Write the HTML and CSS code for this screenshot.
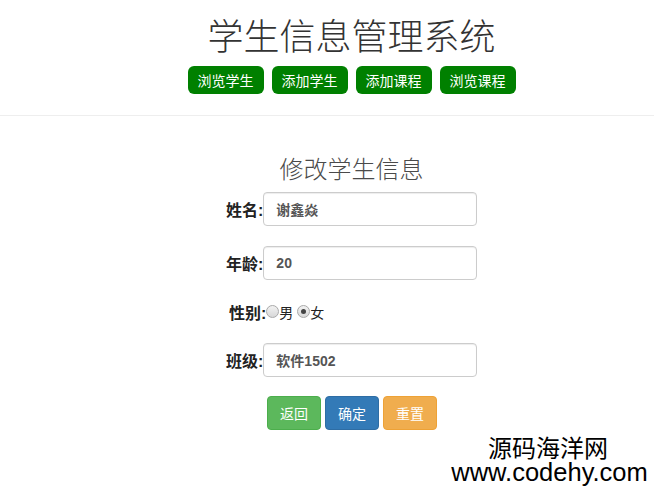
FILE: index.html
```html
<!DOCTYPE html>
<html lang="zh-CN">
<head>
<meta charset="utf-8">
<title>学生信息管理系统</title>
<link rel="stylesheet" href="styles.css">
</head>
<body>
<header class="top">
  <h1 class="title">学生信息管理系统</h1>
  <nav class="nav">
    <a class="nav-btn" href="#">浏览学生</a>
    <a class="nav-btn" href="#">添加学生</a>
    <a class="nav-btn" href="#">添加课程</a>
    <a class="nav-btn" href="#">浏览课程</a>
  </nav>
</header>
<hr class="divider">
<main class="content">
  <h3 class="form-title">修改学生信息</h3>
  <form class="form">
    <div class="row"><label class="lbl">姓名:</label><input class="field" type="text" value="谢鑫焱"></div>
    <div class="row"><label class="lbl">年龄:</label><input class="field" type="text" value="20"></div>
    <div class="row row-radio"><span class="lbl">性别:</span><label class="opt"><input class="radio" type="radio" name="sex">男</label> <label class="opt"><input class="radio" type="radio" name="sex" checked>女</label></div>
    <div class="row"><label class="lbl">班级:</label><input class="field" type="text" value="软件1502"></div>
    <div class="actions">
      <button type="button" class="btn btn-success">返回</button>
      <button type="button" class="btn btn-primary">确定</button>
      <button type="button" class="btn btn-warning">重置</button>
    </div>
  </form>
</main>
<div class="watermark">
  <div class="wm-cn">源码海洋网</div>
  <div class="wm-en">www.codehy.com</div>
</div>
</body>
</html>
```
FILE: styles.css
```css
html, body {
  margin: 0;
  padding: 0;
  background: #fff;
}
body {
  font-family: "Liberation Sans", "Noto Sans CJK SC", sans-serif;
  font-size: 14px;
  color: #333;
  position: relative;
  min-height: 490px;
}
.top {
  padding-left: 49px;
  text-align: center;
}
.title {
  margin: 14px 0 0;
  font-size: 36px;
  line-height: 40px;
  font-weight: 300;
  color: #333;
  font-family: "Noto Sans CJK SC", sans-serif;
}
.nav {
  margin-top: 12px;
  display: flex;
  justify-content: center;
  gap: 8px;
}
.nav-btn {
  display: inline-flex;
  align-items: center;
  justify-content: center;
  width: 76px;
  height: 28px;
  box-sizing: border-box;
  background: #008000;
  color: #fff;
  text-decoration: none;
  border-radius: 6px;
  font-size: 14px;
  font-family: "Noto Sans CJK SC", sans-serif;
}
.divider {
  margin: 21px 0 0;
  border: 0;
  border-top: 1px solid #eee;
  height: 0;
}
.content {
  padding-left: 49px;
  display: flex;
  flex-direction: column;
  align-items: center;
}
.form-title {
  margin: 39px 0 11px;
  font-size: 24px;
  line-height: 26px;
  font-weight: 300;
  color: #4a4a4a;
  font-family: "Noto Sans CJK SC", sans-serif;
}
.form {
  width: 251px;
  display: flex;
  flex-direction: column;
}
.row {
  display: flex;
  align-items: center;
  height: 34px;
  margin-bottom: 20px;
}
.row-radio {
  height: 23px;
  padding-left: 3px;
}
.lbl {
  font-weight: bold;
  font-size: 16px;
  color: #222;
  white-space: nowrap;
}
.field {
  width: 214px;
  height: 34px;
  box-sizing: border-box;
  padding: 6px 12px;
  border: 1px solid #ccc;
  border-radius: 4px;
  box-shadow: inset 0 1px 1px rgba(0,0,0,.075);
  font-family: "Liberation Sans", "Noto Sans CJK SC", sans-serif;
  font-size: 14px;
  font-weight: bold;
  color: #555;
  margin: 0;
  outline: none;
}
.opt {
  display: inline-flex;
  align-items: center;
  font-size: 14px;
  color: #222;
}
.row-radio .opt + .opt {
  margin-left: 4px;
}
.radio {
  -webkit-appearance: none;
  appearance: none;
  width: 13px;
  height: 13px;
  margin: 0;
  border: 1px solid #a9a9a9;
  border-radius: 50%;
  background: linear-gradient(#f2f2f2, #d8d8d8);
  box-sizing: border-box;
  position: relative;
}
.radio:checked::after {
  content: "";
  position: absolute;
  left: 3px;
  top: 3px;
  width: 5px;
  height: 5px;
  border-radius: 50%;
  background: #444;
}
.actions {
  margin-top: -1px;
  display: flex;
  justify-content: center;
  gap: 4px;
  padding-left: 1px;
}
.btn {
  width: 54px;
  height: 34px;
  box-sizing: border-box;
  padding: 6px 12px;
  font-size: 14px;
  line-height: 20px;
  color: #fff;
  border: 1px solid transparent;
  border-radius: 4px;
  font-family: "Noto Sans CJK SC", sans-serif;
  cursor: pointer;
}
.btn-success { background: #5cb85c; border-color: #4cae4c; }
.btn-primary { background: #337ab7; border-color: #2e6da4; }
.btn-warning { background: #f0ad4e; border-color: #eea236; }
.watermark {
  position: absolute;
  right: 5px;
  top: 436px;
  width: 202px;
  text-align: center;
  color: #000;
}
.wm-cn {
  font-family: "Noto Sans CJK SC", sans-serif;
  font-size: 24px;
  line-height: 22px;
}
.wm-en {
  font-family: "Liberation Sans", sans-serif;
  font-size: 25.5px;
  line-height: 28px;
  margin-left: 3px;
}
```
